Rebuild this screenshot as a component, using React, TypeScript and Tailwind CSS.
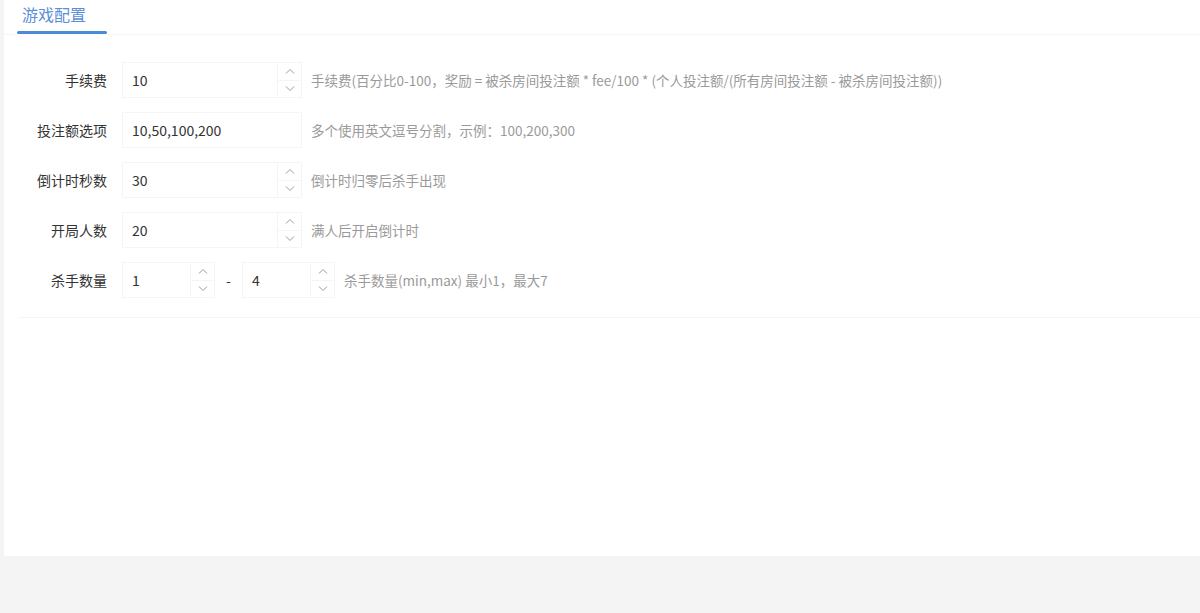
import React from "react";

const font = { fontFamily: '"Noto Sans CJK SC", "Liberation Sans", sans-serif' };

function Spinner() {
  return (
    <div className="flex h-full w-[24px] flex-col border-l border-[#f5f5f5]">
      <div className="flex flex-1 items-center justify-center border-b border-[#f5f5f5]">
        <svg width="10" height="6" viewBox="0 0 10 6" fill="none" stroke="#9a9a9a" strokeWidth="1">
          <path d="M1 5.5 L5 1.5 L9 5.5" />
        </svg>
      </div>
      <div className="flex flex-1 items-center justify-center">
        <svg width="10" height="6" viewBox="0 0 10 6" fill="none" stroke="#9a9a9a" strokeWidth="1">
          <path d="M1 0.5 L5 4.5 L9 0.5" />
        </svg>
      </div>
    </div>
  );
}

function NumInput({ value, w }: { value: string; w: string }) {
  return (
    <div className={`flex h-[36px] items-center border border-[#f5f5f5] bg-white ${w}`}>
      <div className="flex-1 pl-[9px] text-[14px] text-[#333]">{value}</div>
      <Spinner />
    </div>
  );
}

function Row({ label, children, help }: { label: string; children: React.ReactNode; help: string }) {
  return (
    <div className="flex h-[36px] items-center">
      <div className="w-[89px] whitespace-nowrap text-right text-[14px] text-[#333]">{label}</div>
      <div className="ml-[15px] flex items-center">{children}</div>
      <div className="ml-[9px] whitespace-nowrap text-[13.5px] text-[#9a9a9a]">{help}</div>
    </div>
  );
}

export default function App() {
  return (
    <div className="h-[613px] w-[1200px] bg-[#f4f4f4]" style={font}>
      <div className="ml-[4px] h-[556px] w-[1196px] bg-white">
        <div className="h-[35px] border-b border-[#f6f6f6]">
          <div className="ml-[13px] flex h-[34px] w-[90px] flex-col">
            <div className="flex-1 pl-[5px] pt-[3px] text-[16px] leading-[22px] text-[#5a8fd8]">游戏配置</div>
            <div className="h-[3px] rounded-full bg-[#4a8ad6]" />
          </div>
        </div>
        <div className="ml-[14px] flex flex-col gap-[14px] border-b border-[#f5f5f5] pb-[19px] pt-[27px]">
          <Row
            label="手续费"
            help="手续费(百分比0-100，奖励 = 被杀房间投注额 * fee/100 * (个人投注额/(所有房间投注额 - 被杀房间投注额))"
          >
            <NumInput value="10" w="w-[180px]" />
          </Row>
          <Row label="投注额选项" help="多个使用英文逗号分割，示例：100,200,300">
            <div className="flex h-[36px] w-[180px] items-center border border-[#f5f5f5] bg-white pl-[9px] text-[14px] text-[#333]">
              10,50,100,200
            </div>
          </Row>
          <Row label="倒计时秒数" help="倒计时归零后杀手出现">
            <NumInput value="30" w="w-[180px]" />
          </Row>
          <Row label="开局人数" help="满人后开启倒计时">
            <NumInput value="20" w="w-[180px]" />
          </Row>
          <Row label="杀手数量" help="杀手数量(min,max) 最小1，最大7">
            <div className="flex items-center">
              <NumInput value="1" w="w-[93px]" />
              <div className="w-[27px] text-center text-[14px] text-[#333]">-</div>
              <NumInput value="4" w="w-[93px]" />
            </div>
          </Row>
        </div>
      </div>
    </div>
  );
}
